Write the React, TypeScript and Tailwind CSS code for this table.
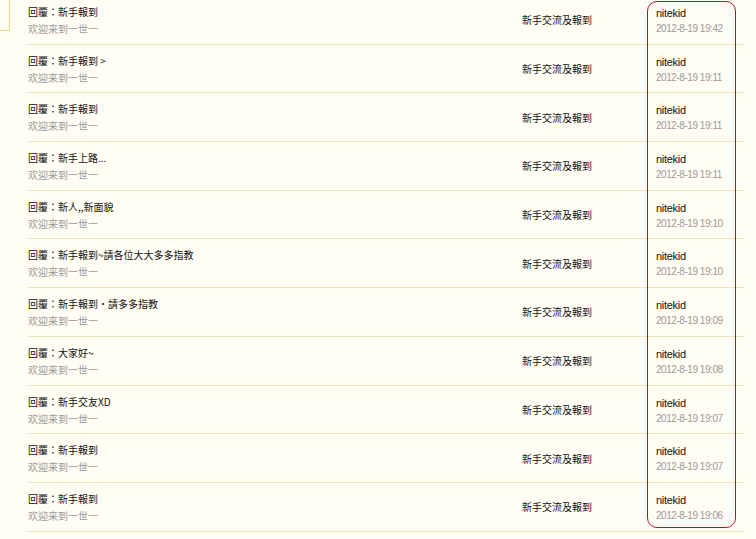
import React from "react";

const rows = [
  { t: "回覆：新手報到", d: "2012-8-19 19:42" },
  { t: "回覆：新手報到 >", d: "2012-8-19 19:11" },
  { t: "回覆：新手報到", d: "2012-8-19 19:11" },
  { t: "回覆：新手上路...", d: "2012-8-19 19:11" },
  { t: "回覆：新人,,新面貌", d: "2012-8-19 19:10" },
  { t: "回覆：新手報到~請各位大大多多指教", d: "2012-8-19 19:10" },
  { t: "回覆：新手報到・請多多指教", d: "2012-8-19 19:09" },
  { t: "回覆：大家好~", d: "2012-8-19 19:08" },
  { t: "回覆：新手交友XD", d: "2012-8-19 19:07" },
  { t: "回覆：新手報到", d: "2012-8-19 19:07" },
  { t: "回覆：新手報到", d: "2012-8-19 19:06" },
];

const cjk = { fontFamily: '"Noto Sans CJK TC", "Noto Sans CJK SC", sans-serif' };
const lat = { fontFamily: '"Liberation Sans", Arial, sans-serif' };

export default function App() {
  return (
    <div className="relative w-[756px] h-[539px] overflow-hidden bg-[#fffdf4] flex">
      <div className="w-[28px] shrink-0">
        <div className="w-[10px] h-[31px] border-r border-b border-[#e8d48a]" />
      </div>
      <div className="w-[717px] -mt-[4px] flex flex-col">
        {rows.map((r, i) => (
          <div
            key={i}
            className="h-[48.7px] shrink-0 border-b border-[#eee3bd] flex items-stretch"
          >
            <div className="w-[494px] pt-[7px] flex flex-col">
              <div className="h-[17px] leading-[17px] text-[10px] text-[#111]" style={cjk}>
                {r.t}
              </div>
              <div className="h-[17px] leading-[17px] text-[10px] text-[#9a9a9a]" style={cjk}>
                欢迎来到一世一
              </div>
            </div>
            <div className="w-[134px] flex items-center">
              <span className="text-[10px] text-[#111]" style={cjk}>
                新手交流及報到
              </span>
            </div>
            <div className="flex-1 pt-[9px] flex flex-col">
              <div className="h-[16px] leading-[16px] text-[11px] tracking-[-0.3px] text-[#111]" style={lat}>
                nitekid
              </div>
              <div className="h-[15px] leading-[15px] text-[10px] tracking-[-0.45px] text-[#9a9a9a]" style={lat}>
                {r.d}
              </div>
            </div>
          </div>
        ))}
      </div>
      <div className="absolute left-[647px] top-[1px] w-[89px] h-[527px] border-[1.5px] border-[#b5122b] rounded-[10px] pointer-events-none" />
    </div>
  );
}
